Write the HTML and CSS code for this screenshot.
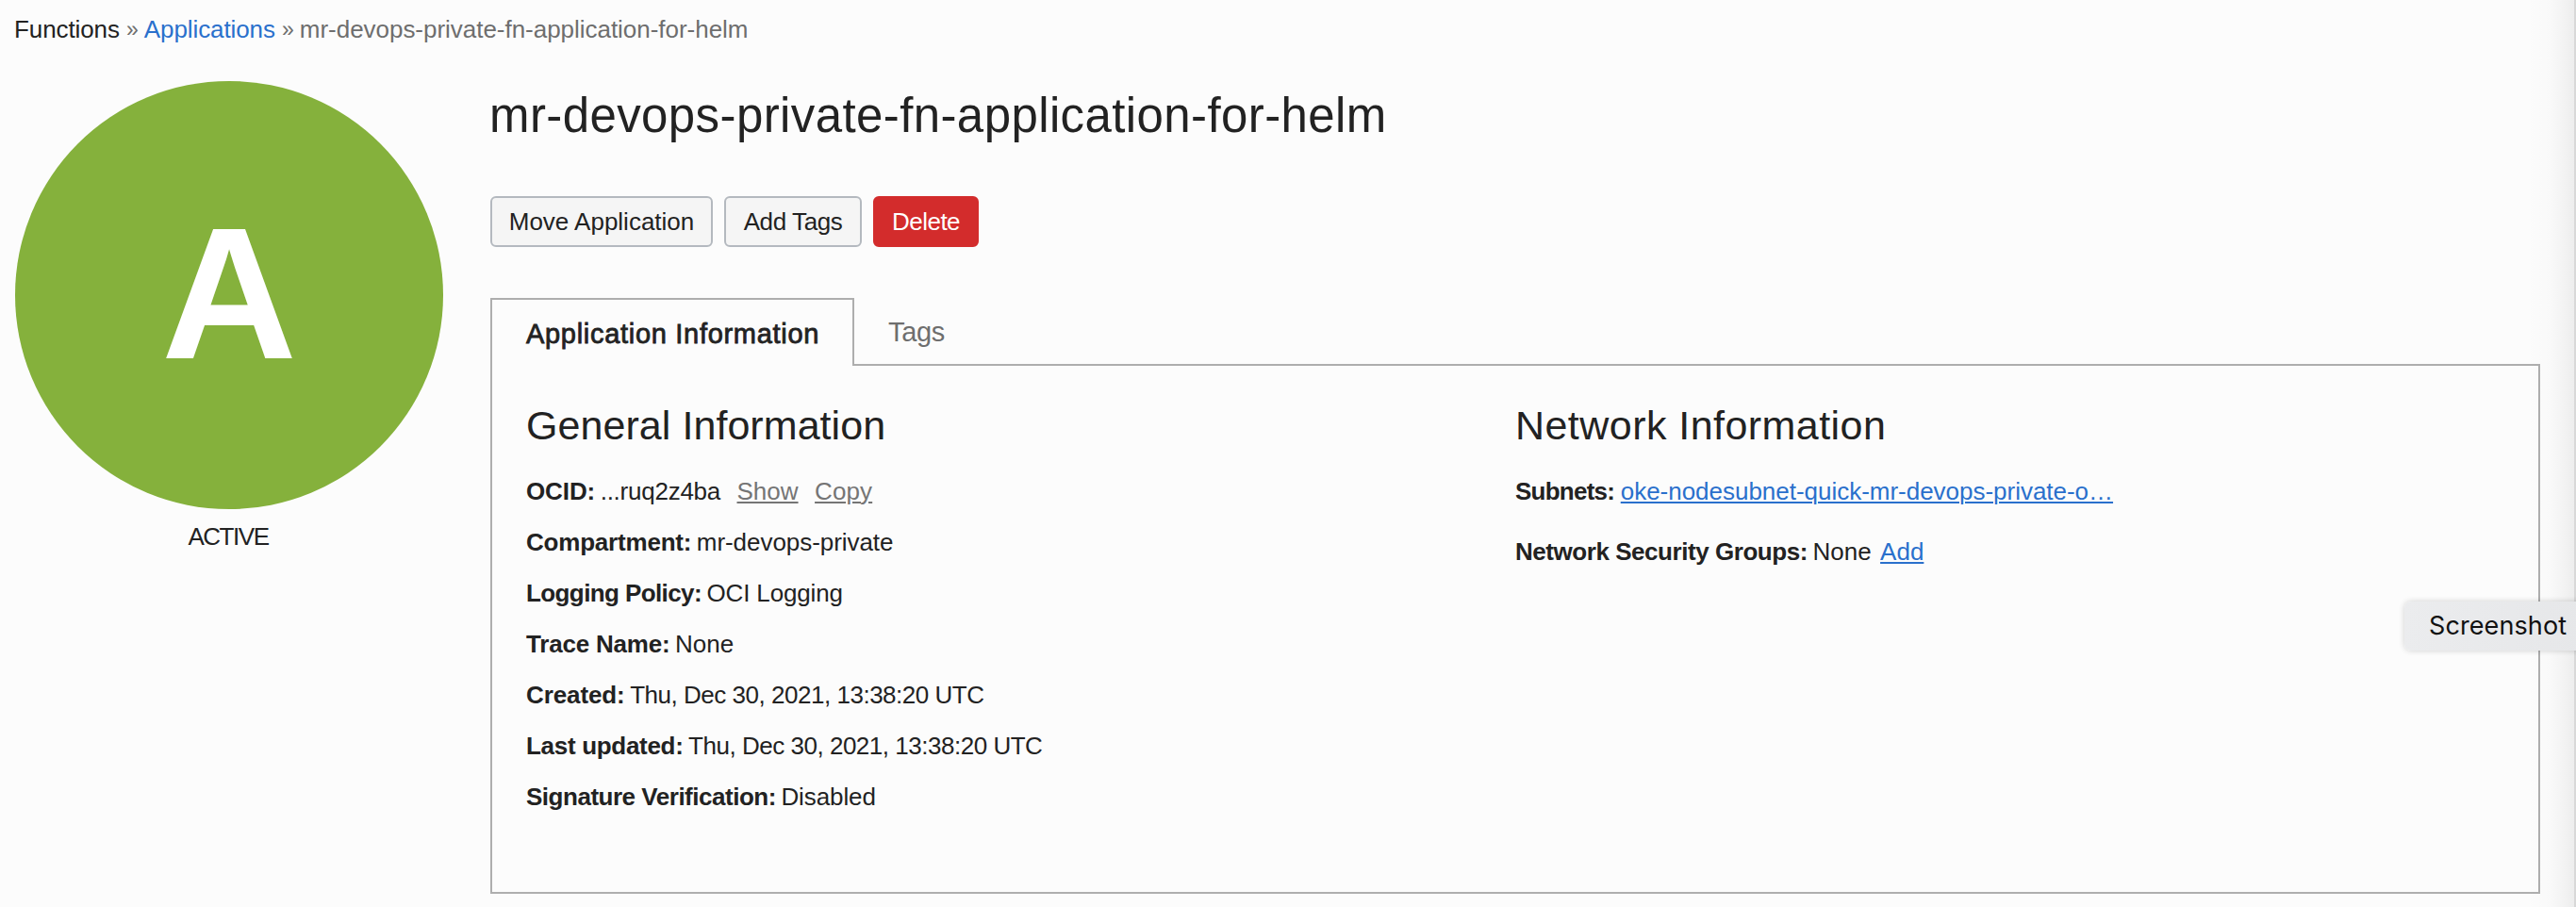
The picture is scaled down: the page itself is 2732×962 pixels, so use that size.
FILE: index.html
```
<!DOCTYPE html>
<html lang="en">
<head>
<meta charset="utf-8">
<title>mr-devops-private-fn-application-for-helm</title>
<link rel="stylesheet" href="styles.css">
</head>
<body>
<nav class="crumbs"><span class="crumb-root">Functions</span><span class="sep">»</span><a class="crumb-link">Applications</a><span class="sep">»</span><span class="crumb-current">mr-devops-private-fn-application-for-helm</span></nav>
<main class="detail">
  <aside class="status">
    <div class="badge">A</div>
    <div class="state">ACTIVE</div>
  </aside>
  <section class="content">
    <h1 class="title">mr-devops-private-fn-application-for-helm</h1>
    <div class="actions">
      <button class="btn btn-move">Move Application</button>
      <button class="btn btn-tags">Add Tags</button>
      <button class="btn btn-delete">Delete</button>
    </div>
    <div class="tabs">
      <div class="tab tab-active">Application Information</div>
      <div class="tab">Tags</div>
    </div>
    <div class="panel">
      <div class="group">
        <h2 class="heading">General Information</h2>
        <div class="row"><b class="ls-10">OCID:</b><span class="ls-25">...ruq2z4ba</span><a class="muted show">Show</a><a class="muted copy">Copy</a></div>
        <div class="row"><b class="ls-20">Compartment:</b><span class="ls-5">mr-devops-private</span></div>
        <div class="row"><b class="ls-60">Logging Policy:</b><span class="ls-15">OCI Logging</span></div>
        <div class="row"><b class="ls-20">Trace Name:</b><span>None</span></div>
        <div class="row"><b class="ls-10">Created:</b><span class="ls-50">Thu, Dec 30, 2021, 13:38:20 UTC</span></div>
        <div class="row"><b class="ls-30">Last updated:</b><span class="ls-50">Thu, Dec 30, 2021, 13:38:20 UTC</span></div>
        <div class="row"><b class="ls-50">Signature Verification:</b><span class="ls-10">Disabled</span></div>
      </div>
      <div class="group">
        <h2 class="heading heading-network">Network Information</h2>
        <div class="row"><b class="ls-75">Subnets:</b><a class="link subnet">oke-nodesubnet-quick-mr-devops-private-o…</a></div>
        <div class="row row-security"><b class="ls-45">Network Security Groups:</b><span>None</span><a class="link add">Add</a></div>
      </div>
    </div>
  </section>
</main>
<div class="edge"></div>
<div class="tip">Screenshot</div>
</body>
</html>
```
FILE: styles.css
```
* { box-sizing: border-box; }
body {
  position: relative;
  margin: 0;
  padding-top: 4px;
  width: 2732px;
  height: 962px;
  overflow: hidden;
  background: #fcfcfc;
  color: #222;
  font: 26px/54px "Liberation Sans", Arial, sans-serif;
}
h1, h2 { margin: 0; font-weight: 400; }

.crumbs { display: flex; height: 54px; padding-left: 15px; white-space: nowrap; }
.crumb-root { letter-spacing: -0.1px; }
.crumb-link { color: #2a70cc; letter-spacing: -0.1px; }
.crumb-current, .sep { color: #6e6e6e; }
.crumb-current { letter-spacing: -0.03px; }
.sep { width: 26px; padding-left: 1px; text-align: center; font-size: 23px; }

.detail { display: flex; gap: 50px; margin-top: 28px; padding-left: 16px; }
.status { width: 454px; }
.badge {
  display: flex;
  align-items: center;
  justify-content: center;
  height: 454px;
  padding-bottom: 4px;
  border-radius: 50%;
  background: #85b13c;
  color: #fff;
  font-size: 199px;
  font-weight: 700;
  line-height: 1;
}
.state { margin-top: 2px; padding-right: 2px; text-align: center; letter-spacing: -1.45px; }

.content { width: 2174px; padding-top: 2px; }
.title { font-size: 51px; line-height: 70px; letter-spacing: 0.4px; margin-left: -1px; }
.actions { display: flex; gap: 12px; margin-top: 50px; }
.btn {
  height: 54px;
  padding: 0;
  border: 2px solid #b4b9bf;
  border-radius: 6px;
  background: #f5f5f5;
  color: #222;
  font: inherit;
  line-height: 50px;
}
.btn-move { width: 236px; }
.btn-tags { width: 146px; letter-spacing: -0.4px; }
.btn-delete { width: 112px; border-color: #d32c2c; background: #d32c2c; color: #fff; letter-spacing: -0.5px; }

.tabs { display: flex; align-items: flex-start; height: 70px; margin-top: 54px; }
.tab { padding: 9px 0 0 36px; color: #6e6e6e; font-size: 29px; letter-spacing: -0.3px; }
.tab-active {
  position: relative;
  width: 386px;
  height: 72px;
  border: 2px solid #aeaeae;
  border-bottom: 0;
  background: #fcfcfc;
  color: #222;
  letter-spacing: 0.7px;
  -webkit-text-stroke: 0.8px #222;
}
.panel {
  display: grid;
  grid-template-columns: 1049px 1fr;
  height: 562px;
  padding: 33px 0 0 36px;
  border: 2px solid #aeaeae;
}
.heading { margin-bottom: 13px; font-size: 43px; line-height: 60px; letter-spacing: 0.06px; }
.heading-network { letter-spacing: 0.45px; }
.row { display: flex; gap: 5.5px; height: 54px; white-space: nowrap; }
.row-security { margin-top: 10px; }
.link, .muted { text-decoration: underline; text-decoration-thickness: 2px; text-underline-offset: 2px; }
.link { color: #2a70cc; }
.muted { color: #757575; }
.show { margin-left: 12px; }
.copy { margin-left: 12px; letter-spacing: 0.1px; }
.add { margin-left: 4px; }
.subnet { margin-left: 1px; letter-spacing: -0.02px; }
.ls-5 { letter-spacing: -0.05px; }
.ls-10 { letter-spacing: -0.1px; }
.ls-15 { letter-spacing: -0.15px; }
.ls-20 { letter-spacing: -0.2px; }
.ls-25 { letter-spacing: -0.25px; }
.ls-30 { letter-spacing: -0.3px; }
.ls-45 { letter-spacing: -0.45px; }
.ls-50 { letter-spacing: -0.48px; }
.ls-60 { letter-spacing: -0.6px; }
.ls-75 { letter-spacing: -0.75px; }

.edge {
  position: absolute;
  top: 0;
  right: 0;
  width: 52px;
  height: 100%;
  border-right: 2px solid #d8d8d8;
  background: linear-gradient(90deg, rgba(0,0,0,0), rgba(0,0,0,.012) 50%, rgba(0,0,0,.06));
}
.tip {
  position: absolute;
  top: 638px;
  left: 2550px;
  width: 190px;
  height: 52px;
  padding-left: 26px;
  border-radius: 7px;
  background: linear-gradient(90deg, #ebecee, #e6e7e9);
  box-shadow: 0 0 6px rgba(0,0,0,.18);
  color: #111;
  font: 27px/52px Inter, sans-serif;
  letter-spacing: 0.1px;
}
```
